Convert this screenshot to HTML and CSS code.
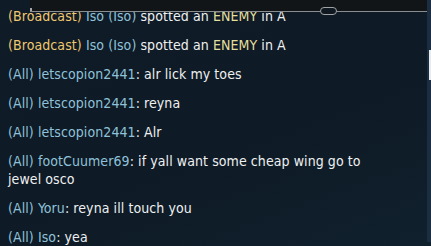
FILE: index.html
```html
<!DOCTYPE html>
<html>
<head>
  <title>Chat</title>
  <link rel="stylesheet" href="styles.css">
</head>
<body>
  <div class="panel">
    <div class="top-bar">
      <span class="knob"></span>
      <span class="pill"></span>
    </div>
    <div class="scroll-track"><span class="scroll-thumb"></span></div>

    <ul class="chat">
      <li><span class="broadcast">(Broadcast)</span> <span class="name">Iso (Iso)</span> spotted an <span class="enemy">ENEMY</span> in A</li>
      <li><span class="broadcast">(Broadcast)</span> <span class="name">Iso (Iso)</span> spotted an <span class="enemy">ENEMY</span> in A</li>
      <li><span class="name">(All) letscopion2441</span>: alr lick my toes</li>
      <li><span class="name">(All) letscopion2441</span>: reyna</li>
      <li><span class="name">(All) letscopion2441</span>: Alr</li>
      <li><span class="name">(All) footCuumer69</span>: if yall want some cheap wing go to jewel osco</li>
      <li><span class="name">(All) Yoru</span>: reyna ill touch you</li>
      <li><span class="name">(All) Iso</span>: yea</li>
    </ul>
  </div>
</body>
</html>
```

FILE: styles.css
```css
* {
  box-sizing: border-box;
}
body {
  margin: 0;
  background-color: #0e1820;
  font-family: "DejaVu Sans Condensed", "DejaVu Sans", sans-serif;
}
.panel {
  position: relative;
  width: 431px;
  height: 246px;
  overflow: hidden;
  background: linear-gradient(160deg, #0f1b26 0%, #0e1a25 50%, #10202d 100%);
}
.top-bar {
  position: relative;
  height: 12px;
  margin-left: 30px;
  background-color: #111518;
  border-bottom: 1px solid #8a8d8f;
}
.knob {
  position: absolute;
  left: 0;
  top: 8px;
  width: 2px;
  height: 3px;
  background-color: #a5a7a8;
}
.pill {
  position: absolute;
  left: 290px;
  top: 7px;
  width: 17px;
  height: 8px;
  border: 1px solid #a0a2a4;
  border-radius: 4px;
  background-color: #0f1820;
}
.scroll-track {
  position: absolute;
  right: 0;
  top: 0;
  bottom: 4px;
  width: 4px;
  background-color: #1b2d40;
}
.scroll-thumb {
  position: absolute;
  right: 0;
  top: 50px;
  width: 2px;
  height: 30px;
  background-color: #e8ecef;
}
.chat {
  list-style: none;
  margin: 0;
  padding: 0 50px 0 8px;
  margin-top: -5px;
  font-size: 14px;
  line-height: 18px;
  letter-spacing: 0.08px;
  color: #eef0f1;
}
.chat li {
  margin-bottom: 11px;
}
.broadcast {
  color: #efc86f;
}
.name {
  color: #8ec2da;
}
.enemy {
  color: #e5df9c;
}
```
